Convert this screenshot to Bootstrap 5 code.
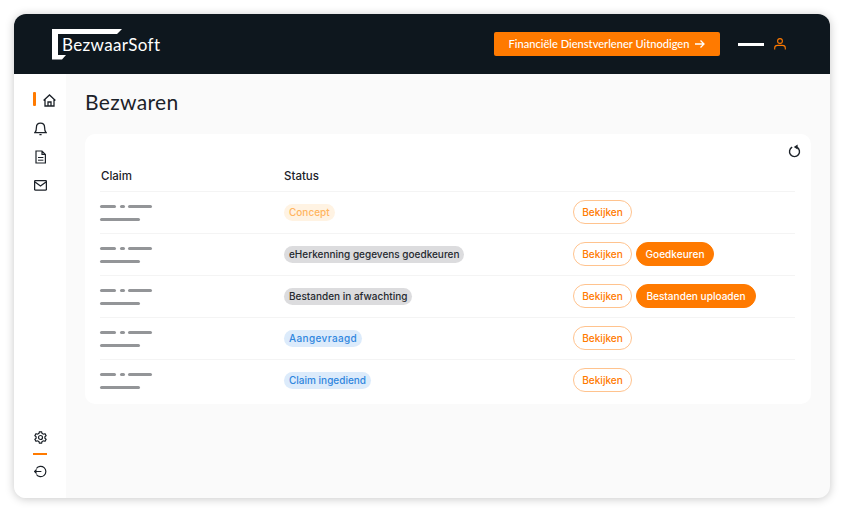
<!DOCTYPE html>
<html lang="nl">
<head>
<meta charset="utf-8">
<title>Bezwaren</title>
<link href="https://cdn.jsdelivr.net/npm/bootstrap@5.3.0/dist/css/bootstrap.min.css" rel="stylesheet">
<style>
html,body{height:100%;margin:0;overflow:hidden}
body{background:#fff;font-family:"Inter","Liberation Sans",sans-serif;color:#1c2229;padding:14px;width:844px;height:512px}
.appwin{width:816px;height:484px;border-radius:12px;overflow:hidden;background:#fafafa;box-shadow:0 1px 10px rgba(0,0,0,.22)}
.topbar{height:60px;background:#0e171e;padding:0 0 0 38px;flex:none}
.logo-wrap{width:108px;height:31px;position:relative;display:block;margin-top:1px;text-decoration:none}
.logo-txt{font-family:"Lato","Liberation Sans",sans-serif;color:#fff;font-size:17px;line-height:1;letter-spacing:.35px;position:absolute;left:10px;top:7px}
.invite{background:#ff7a00;color:#fff;font-family:"Lato",sans-serif;font-weight:500;font-size:11.1px;letter-spacing:0;width:226px;height:24px;border:0;border-radius:2px;padding:0;margin-right:18px;column-gap:6px}
.invite:hover{background:#ff7a00;color:#fff}
.whitebar{width:26px;height:3px;background:#fff;margin-right:10px}
.userbox{margin-right:44px;line-height:0}
.sidebar{width:52px;background:#fff;flex:none;padding:13px 0 20px}
.sideitem{height:28.3px;position:relative}
.sideitem.on::before{content:"";position:absolute;left:19px;top:5px;width:3px;height:14px;background:#ff7a00;border-radius:1px}
.sideitem.on{padding-left:29px}
.sideitem:not(.on){padding-left:20px}
.sep{width:14px;height:2px;background:#ff7a00;margin:9px 0 7px 19px}
.mainpane{padding:15px 19px 0 19px;min-width:0}
.pagetitle{font-family:"Lato",sans-serif;font-weight:400;font-size:21px;letter-spacing:.35px;line-height:26px;margin:0 0 19px 0;color:#1c2229}
.panel{background:#fff;border-radius:10px;height:270px;padding:9px 16px 0 15px;position:relative}
.reload{position:absolute;right:10px;top:10px;line-height:0}
.claims{width:100%;margin-top:20px;table-layout:fixed;border-collapse:collapse}
.claims th{font-weight:500;font-size:11.5px;height:28px;padding:1px 0 2px 1px;vertical-align:middle;border-bottom:1px solid #f4f4f4;color:#1c2229}
.claims td{height:42px;padding:0 0 0 1px;vertical-align:middle;border-bottom:1px solid #f4f4f4}
.claims tr:last-child td{border-bottom:0}
.dashes{display:flex;flex-direction:column;gap:10px;width:52px;margin-left:-1px;margin-top:1px}
.dashline{display:flex;justify-content:space-between}
.dash{height:3px;background:#939598;border-radius:2px;display:block}
.d-a{width:16px}.d-b{width:5px}.d-c{width:24px}.d-d{width:40px}
.pill{display:inline-block;font-weight:500;font-size:10px;line-height:17px;padding:0 5px;border-radius:9px;white-space:nowrap}
.p-conc{background:#fff3e3;color:#ffb55f}
.p-grey{background:#dcdcde;color:#25292e}
.p-blue{background:#dcebfb;color:#2f86de}
.p-wide{letter-spacing:.38px}
.rbtn{font-weight:500;font-size:10.1px;height:24px;line-height:22px;padding:0;border-radius:12px;border:1px solid #ffc38e;background:#fff;color:#ff7a00;text-align:center}
.rbtn.view{width:59px}
.rbtn.fill{background:#ff7a00;border-color:#ff7a00;color:#fff}
.rbtn.w1{width:78px}
.rbtn.w2{width:120px}
.c1{width:183px}.c2{width:289px}
.grow-fill{height:424px}
</style>
</head>
<body>
<div class="appwin d-flex flex-column">
  <header class="topbar d-flex align-items-center justify-content-between">
    <a class="logo-wrap" href="#" aria-label="BezwaarSoft">
      <svg width="70" height="31" viewBox="0 0 70 31" class="position-absolute top-0 start-0"><path fill="#fff" d="M0 0H70L65 5H6V26H14L10 30.5H0Z"/></svg>
      <span class="logo-txt">BezwaarSoft</span>
    </a>
    <div class="d-flex align-items-center">
      <button class="invite btn d-inline-flex align-items-center justify-content-center" type="button">Financiële Dienstverlener Uitnodigen
        <svg width="10" height="10" viewBox="0 0 10 10" fill="none" stroke="#fff" stroke-width="1.3"><path d="M0 5H9M5.5 1.5 9 5 5.5 8.5"/></svg>
      </button>
      <span class="whitebar"></span>
      <span class="userbox"><svg width="12" height="12" viewBox="0 0 12 12" fill="none" stroke="#ff7a00" stroke-width="1.1"><circle cx="6" cy="3" r="2.4"/><path d="M.7 11.6V10C.7 8.3 2 7.4 3.5 7.4H8.5C10 7.4 11.3 8.3 11.3 10V11.6"/></svg></span>
    </div>
  </header>
  <div class="d-flex flex-grow-1 grow-fill">
    <nav class="sidebar d-flex flex-column">
      <div class="sideitem on"><svg width="13" height="13" viewBox="0 0 13 13" fill="none" stroke="#1c2229" stroke-width="1.3"><path d="M.6 6.5 6.5 1 12.4 6.5M2 5.5V12H11V5.5M5 12V8H8V12"/></svg></div>
      <div class="sideitem"><svg width="13" height="14" viewBox="0 0 13 14" fill="none" stroke="#1c2229" stroke-width="1.3"><path d="M1 10.6C2.4 9.4 2.4 8 2.4 5.6 2.4 3 4.2 1.2 6.5 1.2S10.6 3 10.6 5.6C10.6 8 10.6 9.4 12 10.6Z"/><path d="M5.4 12.6H7.6"/></svg></div>
      <div class="sideitem"><svg width="13" height="14" viewBox="0 0 13 14" fill="none" stroke="#1c2229" stroke-width="1.2"><path d="M2 1H8L11.4 4.4V13H2ZM8 1V4.4H11.4"/><path stroke-width="1" d="M4 7.5H9.4M4 10.2H9.4"/></svg></div>
      <div class="sideitem"><svg width="13" height="11" viewBox="0 0 13 11" fill="none" stroke="#1c2229" stroke-width="1.3"><rect x=".6" y=".6" width="11.8" height="9.6" rx="1"/><path d="M1 2 6.5 6 12 2"/></svg></div>
      <div class="mt-auto">
        <div class="ps-3 ms-1 lh-1"><svg width="13" height="13" viewBox="0 0 13 13" fill="none" stroke="#1c2229" stroke-width="1.2"><circle cx="6.5" cy="6.5" r="2"/><path d="M5.4.8H7.6L8 2.4 9.5 3.2 11 2.7 12.1 4.6 10.9 5.7V7.3L12.1 8.4 11 10.3 9.5 9.8 8 10.6 7.6 12.2H5.4L5 10.6 3.5 9.8 2 10.3.9 8.4 2.1 7.3V5.7L.9 4.6 2 2.7 3.5 3.2 5 2.4Z"/></svg></div>
        <div class="sep"></div>
        <div class="ps-3 ms-1 lh-1"><svg width="13" height="13" viewBox="0 0 13 13" fill="none" stroke="#1c2229" stroke-width="1.2"><path d="M2.4 3.5A5.2 5.2 0 1 1 2.4 9.5M.6 6.5H7.4M2.6 4.5.6 6.5 2.6 8.5"/></svg></div>
      </div>
    </nav>
    <main class="mainpane flex-grow-1">
      <h1 class="pagetitle">Bezwaren</h1>
      <section class="panel">
        <span class="reload"><svg width="13" height="14" viewBox="0 0 13 14" fill="none" stroke="#1c2229" stroke-width="1.4"><path d="M4.2 3.2A5 5 0 1 0 8.8 3.2"/><path fill="#1c2229" stroke="none" d="M9.6.6V5.4L5.8 3Z"/></svg></span>
        <table class="claims">
          <colgroup><col class="c1"><col class="c2"><col></colgroup>
          <thead><tr><th>Claim</th><th>Status</th><th></th></tr></thead>
          <tbody>
            <tr><td><div class="dashes"><div class="dashline"><span class="dash d-a"></span><span class="dash d-b"></span><span class="dash d-c"></span></div><span class="dash d-d"></span></div></td><td><div class="d-flex"><span class="pill p-conc">Concept</span></div></td><td><div class="d-flex gap-1"><button class="rbtn view" type="button">Bekijken</button></div></td></tr>
            <tr><td><div class="dashes"><div class="dashline"><span class="dash d-a"></span><span class="dash d-b"></span><span class="dash d-c"></span></div><span class="dash d-d"></span></div></td><td><div class="d-flex"><span class="pill p-grey">eHerkenning gegevens goedkeuren</span></div></td><td><div class="d-flex gap-1"><button class="rbtn view" type="button">Bekijken</button><button class="rbtn fill w1" type="button">Goedkeuren</button></div></td></tr>
            <tr><td><div class="dashes"><div class="dashline"><span class="dash d-a"></span><span class="dash d-b"></span><span class="dash d-c"></span></div><span class="dash d-d"></span></div></td><td><div class="d-flex"><span class="pill p-grey">Bestanden in afwachting</span></div></td><td><div class="d-flex gap-1"><button class="rbtn view" type="button">Bekijken</button><button class="rbtn fill w2" type="button">Bestanden uploaden</button></div></td></tr>
            <tr><td><div class="dashes"><div class="dashline"><span class="dash d-a"></span><span class="dash d-b"></span><span class="dash d-c"></span></div><span class="dash d-d"></span></div></td><td><div class="d-flex"><span class="pill p-blue p-wide">Aangevraagd</span></div></td><td><div class="d-flex gap-1"><button class="rbtn view" type="button">Bekijken</button></div></td></tr>
            <tr><td><div class="dashes"><div class="dashline"><span class="dash d-a"></span><span class="dash d-b"></span><span class="dash d-c"></span></div><span class="dash d-d"></span></div></td><td><div class="d-flex"><span class="pill p-blue">Claim ingediend</span></div></td><td><div class="d-flex gap-1"><button class="rbtn view" type="button">Bekijken</button></div></td></tr>
          </tbody>
        </table>
      </section>
    </main>
  </div>
</div>
<script src="https://cdn.jsdelivr.net/npm/bootstrap@5.3.0/dist/js/bootstrap.bundle.min.js"></script>
</body>
</html>
